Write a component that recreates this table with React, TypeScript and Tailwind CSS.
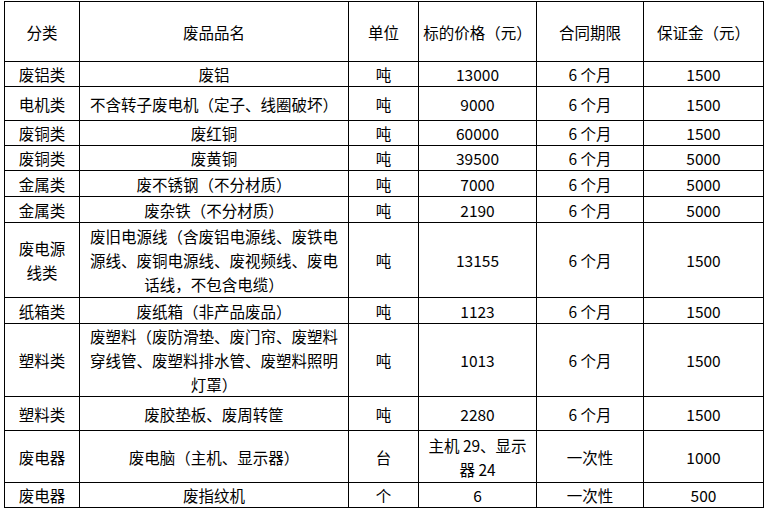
type Row = {
  h: string;
  cat: string[];
  name: string[];
  unit: string;
  price: string[];
  term: string;
  deposit: string;
};

const rows: Row[] = [
  { h: 'h-[25px]', cat: ['废铝类'], name: ['废铝'], unit: '吨', price: ['13000'], term: '6 个月', deposit: '1500' },
  { h: 'h-[34px]', cat: ['电机类'], name: ['不含转子废电机（定子、线圈破坏）'], unit: '吨', price: ['9000'], term: '6 个月', deposit: '1500' },
  { h: 'h-[25px]', cat: ['废铜类'], name: ['废红铜'], unit: '吨', price: ['60000'], term: '6 个月', deposit: '1500' },
  { h: 'h-[25px]', cat: ['废铜类'], name: ['废黄铜'], unit: '吨', price: ['39500'], term: '6 个月', deposit: '5000' },
  { h: 'h-[26px]', cat: ['金属类'], name: ['废不锈钢（不分材质）'], unit: '吨', price: ['7000'], term: '6 个月', deposit: '5000' },
  { h: 'h-[26px]', cat: ['金属类'], name: ['废杂铁（不分材质）'], unit: '吨', price: ['2190'], term: '6 个月', deposit: '5000' },
  {
    h: 'h-[75px]',
    cat: ['废电源', '线类'],
    name: ['废旧电源线（含废铝电源线、废铁电', '源线、废铜电源线、废视频线、废电', '话线，不包含电缆）'],
    unit: '吨',
    price: ['13155'],
    term: '6 个月',
    deposit: '1500',
  },
  { h: 'h-[26px]', cat: ['纸箱类'], name: ['废纸箱（非产品废品）'], unit: '吨', price: ['1123'], term: '6 个月', deposit: '1500' },
  {
    h: 'h-[73px]',
    cat: ['塑料类'],
    name: ['废塑料（废防滑垫、废门帘、废塑料', '穿线管、废塑料排水管、废塑料照明', '灯罩）'],
    unit: '吨',
    price: ['1013'],
    term: '6 个月',
    deposit: '1500',
  },
  { h: 'h-[34px]', cat: ['塑料类'], name: ['废胶垫板、废周转筐'], unit: '吨', price: ['2280'], term: '6 个月', deposit: '1500' },
  { h: 'h-[52px]', cat: ['废电器'], name: ['废电脑（主机、显示器）'], unit: '台', price: ['主机 29、显示', '器 24'], term: '一次性', deposit: '1000' },
  { h: 'h-[24px]', cat: ['废电器'], name: ['废指纹机'], unit: '个', price: ['6'], term: '一次性', deposit: '500' },
];

function Lines({ lines }: { lines: string[] }) {
  return (
    <>
      {lines.map((l, i) => (
        <div key={i}>{l}</div>
      ))}
    </>
  );
}

const cell = 'border border-black px-0 py-0 text-center align-middle whitespace-nowrap';

export default function App() {
  return (
    <div
      className="w-[767px] h-[511px] bg-white text-black overflow-hidden pt-px pl-1"
      style={{ fontFamily: '"Noto Sans CJK SC", "Noto Sans", sans-serif' }}
    >
      <table className="table-fixed border-collapse w-[759px] text-[15.5px] leading-[24px]">
        <colgroup>
          <col className="w-[75px]" />
          <col className="w-[269px]" />
          <col className="w-[70px]" />
          <col className="w-[118px]" />
          <col className="w-[107px]" />
          <col className="w-[120px]" />
        </colgroup>
        <thead>
          <tr className="h-[60px]">
            <th className={`${cell} font-normal`}>分类</th>
            <th className={`${cell} font-normal`}>废品品名</th>
            <th className={`${cell} font-normal`}>单位</th>
            <th className={`${cell} font-normal`}>标的价格（元）</th>
            <th className={`${cell} font-normal`}>合同期限</th>
            <th className={`${cell} font-normal`}>保证金（元）</th>
          </tr>
        </thead>
        <tbody>
          {rows.map((r, i) => (
            <tr key={i} className={r.h}>
              <td className={cell}>
                <Lines lines={r.cat} />
              </td>
              <td className={cell}>
                <Lines lines={r.name} />
              </td>
              <td className={cell}>{r.unit}</td>
              <td className={cell}>
                <Lines lines={r.price} />
              </td>
              <td className={cell}>{r.term}</td>
              <td className={cell}>{r.deposit}</td>
            </tr>
          ))}
        </tbody>
      </table>
    </div>
  );
}
